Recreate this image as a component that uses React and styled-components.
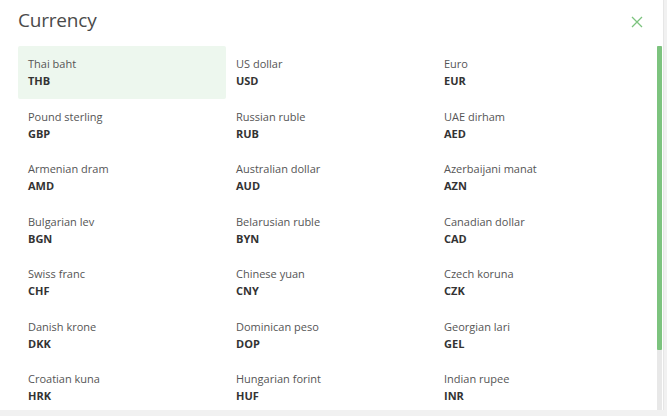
import React from "react";
import styled, { createGlobalStyle } from "styled-components";

const GlobalStyle = createGlobalStyle`
    html, body {
        margin: 0;
        padding: 0;
        background: #f1f1f1;
        font-family: "Open Sans", "Liberation Sans", sans-serif;
    }
`;

const Panel = styled.div`
    width: 664px;
    height: 410px;
    background: #fff;
    box-sizing: border-box;
    display: flex;
    flex-direction: column;
    border-right: 1px solid #e6e6e6;
    overflow: hidden;
`;

const Header = styled.div`
    height: 46px;
    flex: 0 0 46px;
    display: flex;
    align-items: center;
    justify-content: space-between;
    padding: 0 20px 4px 18px;
    box-sizing: border-box;
`;

const Title = styled.h2`
    margin: 0 0 2px;
    font-size: 19px;
    font-weight: 400;
    color: #4a4a4a;
    letter-spacing: -0.2px;
`;

const CloseButton = styled.button`
    border: 0;
    background: none;
    padding: 0;
    margin-top: 2px;
    width: 12px;
    height: 12px;
    cursor: pointer;
    display: flex;
    align-items: center;
    justify-content: center;
`;

const Body = styled.div`
    flex: 1;
    min-height: 0;
    display: flex;
`;

const Content = styled.div`
    flex: 1;
    overflow: hidden;
    padding-left: 18px;
`;

const ScrollTrack = styled.div`
    flex: 0 0 5px;
    margin-right: 1px;
    background: #e8e8e8;
    display: flex;
    flex-direction: column;
`;

const ScrollThumb = styled.div`
    background: #7cc37e;
    border-radius: 1px;
`;

const Grid = styled.div`
    display: grid;
    grid-template-columns: repeat(3, 208px);
    grid-auto-rows: 52.5px;
`;

const Tile = styled.div`
    padding: 9px 10px;
    border-radius: 2px;
    background: ${(p) => (p.$active ? "#edf7ee" : "transparent")};
    cursor: pointer;
    line-height: 17px;
`;

const Name = styled.div`
    font-size: 11px;
    color: #555;
`;

const Code = styled.div`
    font-size: 11px;
    font-weight: 700;
    color: #333;
`;

const currencies = [
    ["Thai baht", "THB"],
    ["US dollar", "USD"],
    ["Euro", "EUR"],
    ["Pound sterling", "GBP"],
    ["Russian ruble", "RUB"],
    ["UAE dirham", "AED"],
    ["Armenian dram", "AMD"],
    ["Australian dollar", "AUD"],
    ["Azerbaijani manat", "AZN"],
    ["Bulgarian lev", "BGN"],
    ["Belarusian ruble", "BYN"],
    ["Canadian dollar", "CAD"],
    ["Swiss franc", "CHF"],
    ["Chinese yuan", "CNY"],
    ["Czech koruna", "CZK"],
    ["Danish krone", "DKK"],
    ["Dominican peso", "DOP"],
    ["Georgian lari", "GEL"],
    ["Croatian kuna", "HRK"],
    ["Hungarian forint", "HUF"],
    ["Indian rupee", "INR"],
];

const visibleRatio = 304 / 364;

export default function App() {
    return (
        <>
            <GlobalStyle />
            <Panel>
                <Header>
                    <Title>Currency</Title>
                    <CloseButton aria-label="close">
                        <svg width="12" height="12" viewBox="0 0 12 12">
                            <path
                                d="M1 1 L11 11 M11 1 L1 11"
                                stroke="#7cc37e"
                                strokeWidth="1.3"
                                fill="none"
                            />
                        </svg>
                    </CloseButton>
                </Header>
                <Body>
                    <Content>
                        <Grid>
                            {currencies.map(([name, code], i) => (
                                <Tile key={code} $active={i === 0}>
                                    <Name>{name}</Name>
                                    <Code>{code}</Code>
                                </Tile>
                            ))}
                        </Grid>
                    </Content>
                    <ScrollTrack>
                        <ScrollThumb style={{ height: `${visibleRatio * 100}%` }} />
                    </ScrollTrack>
                </Body>
            </Panel>
        </>
    );
}
